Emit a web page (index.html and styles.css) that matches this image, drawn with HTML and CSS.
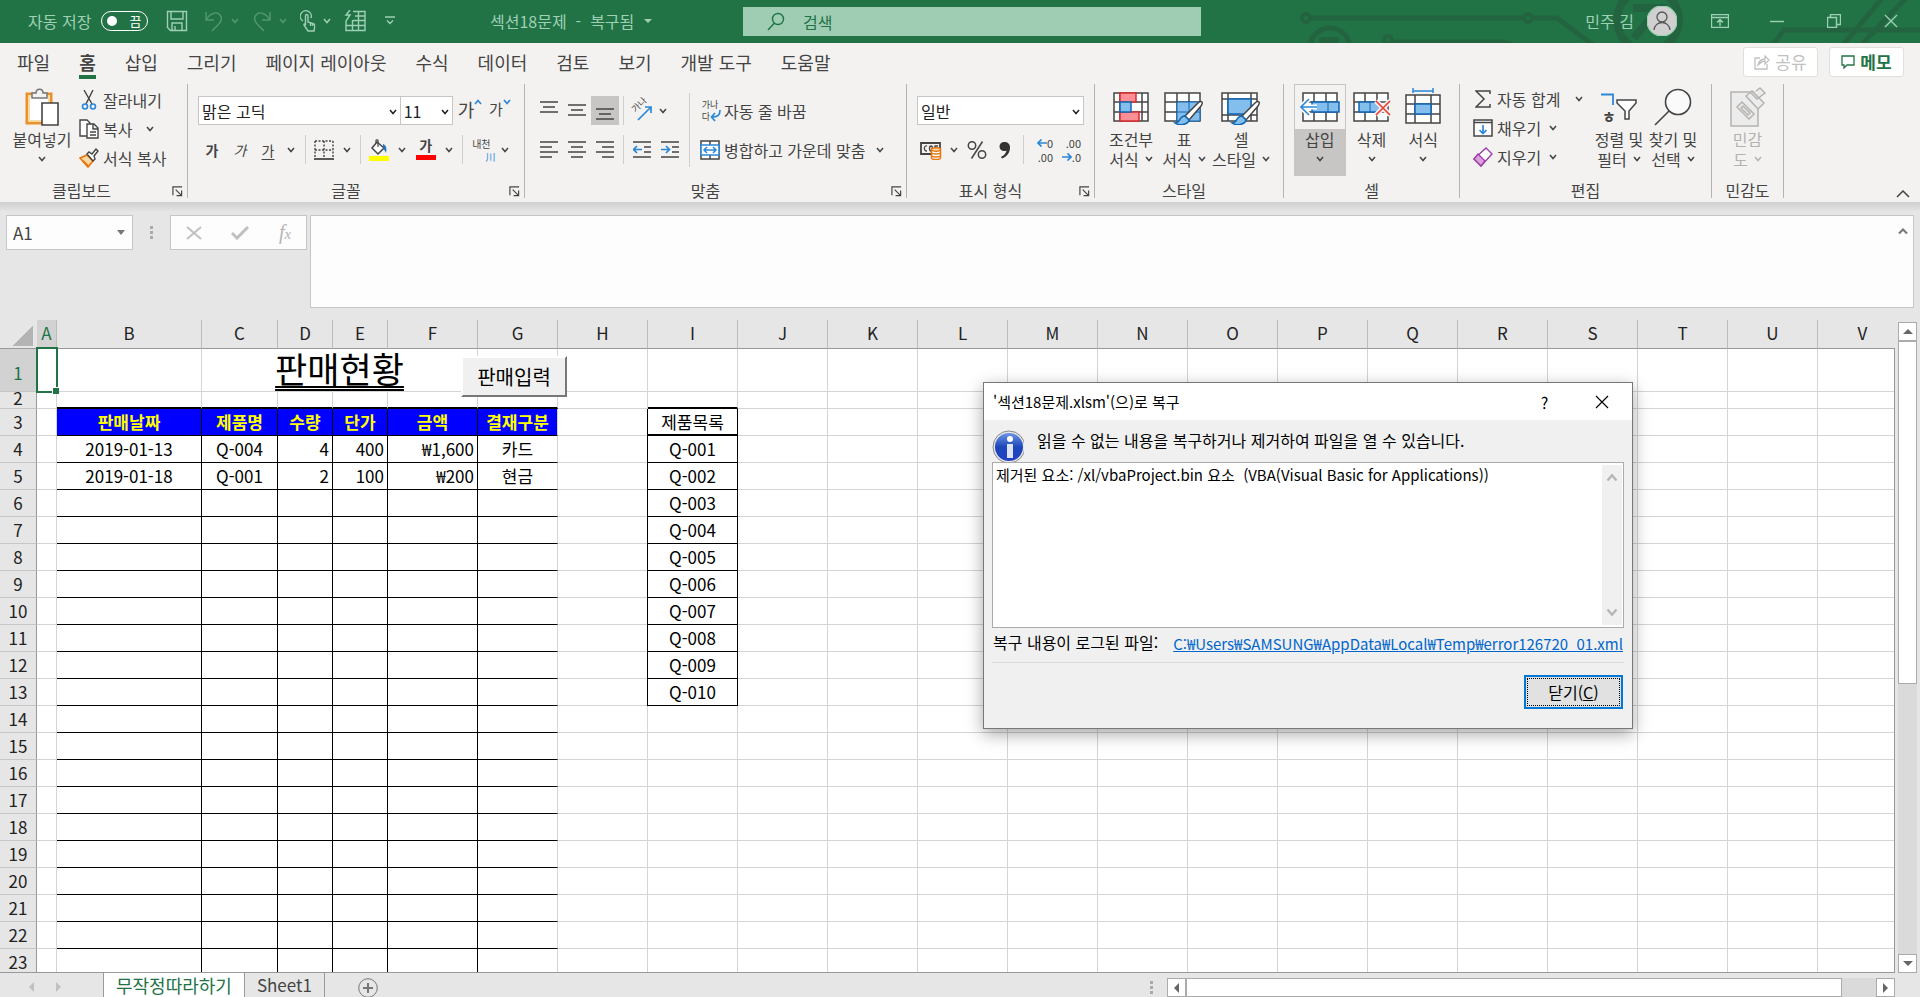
FILE: index.html
```html
<!DOCTYPE html>
<html lang="ko">
<head>
  <meta charset="UTF-8">
  <meta name="viewport" content="width=device-width, initial-scale=1.0">
  <title>섹션18문제 - 복구됨</title>
  <link rel="stylesheet" href="styles.css">
</head>
<body>
  <svg class="symbols" aria-hidden="true">
    <symbol id="chev" viewBox="0 0 8 6"><path d="M1 1l3 3.500L7 1" fill="none" stroke="currentColor" stroke-width="1.500"/></symbol>
    <symbol id="launch" viewBox="0 0 12 12"><path d="M1 10V1h10M4 4l6 6M10.500 5v5.500H5" fill="none" stroke="currentColor" stroke-width="1.300"/></symbol>
    <symbol id="brush" viewBox="0 0 34 34"><path d="M32 10c-1-1-3 0-4 1L15 24l4 4 12-14c1-2 2-3 1-4z" fill="#fff" stroke="#444" stroke-width="1.500"/><path d="M15 24c-4 0-5 3-6 5-1 1-3 2-4 2 4 3 13 2 14-3z" fill="#83beec" stroke="#1066b5" stroke-width="1.500"/></symbol>
  </svg>

  <header class="titlebar">
    <svg class="circuit" width="640" height="43" viewBox="0 0 640 43" fill="none" stroke="#24633f" stroke-width="5">
      <circle cx="26" cy="18" r="4" stroke-width="4"/><path d="M31 18h212"/><circle cx="248" cy="18" r="4" stroke-width="4"/><path d="M253 18h24l40 30"/>
      <circle cx="50" cy="48" r="20"/><path d="M39 40h20" stroke-width="6"/><circle cx="108" cy="40" r="4" stroke-width="4"/><path d="M113 42h110l12 4"/>
      <circle cx="368" cy="20" r="31" stroke-width="8"/><path d="M353 8h26L354 38" stroke-width="8"/>
      <path d="M492 46l12-16h136M562 46L604-4M580 46L628-4"/>
    </svg>
    <div class="quick">
      <span>자동 저장</span>
      <button class="toggle" aria-label="자동 저장 끔"><i></i>끔</button>
      <button class="qbtn" aria-label="저장"><svg width="22" height="22" viewBox="0 0 22 22"><path d="M1.500 1.500h19v19h-16l-3-3zM5 2v7h12V2M6 20v-7h10v7M9 20v-4" /></svg></button>
      <button class="qbtn dim" aria-label="실행 취소"><svg width="20" height="22" viewBox="0 0 20 22"><path d="M2 2v8h8M2 10C6 3 13 1 16 5c4 5-1 9-8 16"/></svg></button>
      <svg class="chev dim"><use href="#chev"/></svg>
      <button class="qbtn dim" aria-label="다시 실행"><svg width="20" height="22" viewBox="0 0 20 22"><path d="M18 2v8h-8M18 10C14 3 7 1 4 5c-4 5 1 9 8 16"/></svg></button>
      <svg class="chev dim"><use href="#chev"/></svg>
      <button class="qbtn" aria-label="터치"><svg width="16" height="22" viewBox="0 0 16 22"><path d="M3 11a5.500 5.500 0 1 1 8-3M5.500 15V6c0-2 2.500-2 2.500 0v6l6 2c1 .5 1 2 0 7H8l-4-6c0-1.500 1-1 2 0M10.500 13v3M12.500 14v2"/></svg></button>
      <svg class="chev"><use href="#chev"/></svg>
      <button class="qbtn" aria-label="표"><svg width="22" height="22" viewBox="0 0 22 22"><path d="M9 1.500h12v19H2V11M2 15.500h19M9 10.500h12M11 6h10M8.500 10v11M14.500 2v19M6 0L2 5h4l-4 6"/></svg></button>
      <svg class="custom" width="10" height="10" viewBox="0 0 10 10"><path d="M0 1h10M2 4.500l3 3 3-3"/></svg>
    </div>
    <div class="doc-name">섹션18문제&nbsp; -&nbsp; 복구됨 <i></i></div>
    <label class="search">
      <svg width="18" height="20" viewBox="0 0 18 20"><circle cx="11" cy="7" r="5.500"/><path d="M7.500 11L1 18"/></svg>
      <input type="text" placeholder="검색" aria-label="검색">
    </label>
    <div class="account">
      <span>민주 김</span>
      <svg width="30" height="30" viewBox="0 0 30 30"><circle cx="15" cy="15" r="15" fill="#d0d0d0"/><g fill="none" stroke="#555" stroke-width="1.300"><circle cx="15" cy="11" r="5"/><path d="M7 24c1-10 15-10 16 0"/></g></svg>
    </div>
    <div class="window-btns">
      <button aria-label="리본 표시 옵션"><svg width="18" height="14" viewBox="0 0 18 14"><path d="M.5.500h17v13H.5zM.5 3.500h17M9 12V6M6 8.500L9 5.500l3 3"/></svg></button>
      <button aria-label="최소화"><svg width="14" height="14" viewBox="0 0 14 14"><path d="M0 7.500h14"/></svg></button>
      <button aria-label="이전 크기로"><svg width="14" height="14" viewBox="0 0 14 14"><path d="M.5 3.500h9v10h-9zM3.500 3V.5h10v10H10"/></svg></button>
      <button aria-label="닫기"><svg width="14" height="14" viewBox="0 0 14 14"><path d="M1 1l12 12M13 1L1 13"/></svg></button>
    </div>
  </header>

  <nav class="tabs">
    <a href="#">파일</a><a href="#" class="active">홈</a><a href="#">삽입</a><a href="#">그리기</a><a href="#">페이지 레이아웃</a><a href="#">수식</a><a href="#">데이터</a><a href="#">검토</a><a href="#">보기</a><a href="#">개발 도구</a><a href="#">도움말</a>
    <div class="share-btns">
      <button class="share" disabled><svg width="16" height="16" viewBox="0 0 16 16"><path d="M6 4H1v11h12v-5M4 11c1-4 4-6 7-6V2l4 4-4 4V7c-3 0-5 2-7 4z"/></svg>공유</button>
      <button class="memo"><svg width="14" height="14" viewBox="0 0 14 14"><path d="M1 1h12v9H6l-3 3v-3H1z"/></svg>메모</button>
    </div>
  </nav>

  <section class="ribbon">
    <div class="group g-clip">
      <div class="body">
        <button class="big">
          <span class="pic"><svg width="36" height="40" viewBox="0 0 36 40"><path d="M3 7h24v29H3z" fill="#fff" stroke="#e8912d" stroke-width="3"/><path d="M5 9h20v25H5z" fill="none" stroke="#fbd9a0" stroke-width="2"/><path d="M8 11V6h4c0-5 7-5 7 0h4v5z" fill="#f3f2f1" stroke="#777" stroke-width="1.500"/><path d="M18 16h16v22H18z" fill="#fff" stroke="#444" stroke-width="1.600"/></svg></span>
          <span>붙여넣기</span><svg class="chev"><use href="#chev"/></svg>
        </button>
        <div class="list">
          <button><span class="ico"><svg width="16" height="20" viewBox="0 0 16 20"><path d="M3 0l8 14M12 0L5 14" fill="none" stroke="#444" stroke-width="1.400"/><g fill="none" stroke="#2b88d8" stroke-width="1.600"><circle cx="4" cy="16.500" r="2.500"/><circle cx="12" cy="16.500" r="2.500"/></g></svg></span>잘라내기</button>
          <button><span class="ico"><svg width="20" height="20" viewBox="0 0 20 20" fill="#fff" stroke="#444" stroke-width="1.400"><path d="M1 1h7l3 3v13H1z"/><path d="M8 5h7l4 4v10H8zM14 5v5h5M11 13h6M11 16h6"/></svg></span>복사 <svg class="chev"><use href="#chev"/></svg></button>
          <button><span class="ico"><svg width="20" height="20" viewBox="0 0 20 20"><path d="M1 10l7-3 6 6-5 6z" fill="#fbd9a0" stroke="#e8740c" stroke-width="1.600"/><path d="M4 13l5 5" stroke="#e8740c" stroke-width="2"/><path d="M8 6l2-2 3 2 4-5 2 2-4 5 1 3-2 2z" fill="#fff" stroke="#444" stroke-width="1.400"/></svg></span>서식 복사</button>
        </div>
      </div>
      <div class="label">클립보드<svg class="launch"><use href="#launch"/></svg></div>
    </div>

    <div class="group g-font">
      <div class="body rows">
        <div class="row">
          <span class="combo font-name"><select aria-label="글꼴"><option>맑은 고딕</option></select><svg class="chev"><use href="#chev"/></svg></span>
          <span class="combo font-size"><select aria-label="글꼴 크기"><option>11</option></select><svg class="chev"><use href="#chev"/></svg></span>
          <button class="tool grow">가<svg width="8" height="6" viewBox="0 0 8 6"><path d="M1 5l3-3.500L7 5"/></svg></button>
          <button class="tool shrink">가<svg width="8" height="6" viewBox="0 0 8 6"><path d="M1 1l3 3.500L7 1"/></svg></button>
        </div>
        <div class="row">
          <button class="tool bold">가</button><button class="tool italic">가</button><button class="tool under">가</button><button class="drop" aria-label="밑줄"><svg class="chev"><use href="#chev"/></svg></button>
          <i class="vsep"></i>
          <button class="tool" aria-label="테두리"><svg width="20" height="20" viewBox="0 0 20 20"><path d="M1 1h18M1 10h18M1 1v17M10 1v17M19 1v17" fill="none" stroke="#444" stroke-width="1.400" stroke-dasharray="2 1.500"/><path d="M0 19h20" stroke="#333" stroke-width="1.600"/></svg></button><button class="drop" aria-label="테두리 종류"><svg class="chev"><use href="#chev"/></svg></button>
          <i class="vsep"></i>
          <button class="tool" aria-label="채우기 색"><svg width="20" height="22" viewBox="0 0 20 22"><path d="M8 3l7 6-6 6-6-6z" fill="#fff" stroke="#444" stroke-width="1.500"/><path d="M9 8V1.500c0-1-2-1-2 0V4" fill="none" stroke="#444" stroke-width="1.200"/><path d="M14 5c3 1 4 4 3 9-1-2-2-4-3-5z" fill="#1e74c0"/><path d="M0 17h20v5H0z" fill="#ff0"/></svg></button><button class="drop" aria-label="채우기 색 선택"><svg class="chev"><use href="#chev"/></svg></button>
          <button class="tool color">가</button><button class="drop" aria-label="글꼴 색 선택"><svg class="chev"><use href="#chev"/></svg></button>
          <i class="vsep"></i>
          <button class="tool ruby"><span>내천</span><b>川</b></button><button class="drop" aria-label="윗주"><svg class="chev"><use href="#chev"/></svg></button>
        </div>
      </div>
      <div class="label">글꼴<svg class="launch"><use href="#launch"/></svg></div>
    </div>

    <div class="group g-align">
      <div class="body">
        <div class="rows">
          <div class="row">
            <button class="tool" aria-label="위쪽 맞춤"><svg class="lines" viewBox="0 0 18 22"><path d="M0 2h18M3 7h12M0 12h18"/></svg></button><button class="tool" aria-label="가운데 맞춤"><svg class="lines" viewBox="0 0 18 22"><path d="M0 5h18M3 10h12M0 15h18"/></svg></button><button class="tool on" aria-label="아래쪽 맞춤"><svg class="lines" viewBox="0 0 18 22"><path d="M0 9h18M3 14h12M0 19h18"/></svg></button>
            <i class="vsep"></i>
            <button class="tool orient" aria-label="방향"><span>가나</span><svg width="16" height="16" viewBox="0 0 16 16"><path d="M1 15L14 2M8 2h6v6"/></svg></button><button class="drop near" aria-label="방향 선택"><svg class="chev"><use href="#chev"/></svg></button>
          </div>
          <div class="row">
            <button class="tool" aria-label="왼쪽 맞춤"><svg class="lines" viewBox="0 0 18 22"><path d="M0 3h18M0 8h12M0 13h18M0 18h12"/></svg></button><button class="tool" aria-label="가운데"><svg class="lines" viewBox="0 0 18 22"><path d="M0 3h18M3 8h12M0 13h18M3 18h12"/></svg></button><button class="tool" aria-label="오른쪽 맞춤"><svg class="lines" viewBox="0 0 18 22"><path d="M0 3h18M6 8h12M0 13h18M6 18h12"/></svg></button>
            <i class="vsep"></i>
            <button class="tool" aria-label="내어쓰기"><svg class="lines" viewBox="0 0 18 22"><path d="M0 3h18M11 8h7M11 13h7M0 18h18"/><path class="blue" d="M9 10.500H1M4 7l-3.500 3.500L4 14"/></svg></button><button class="tool" aria-label="들여쓰기"><svg class="lines" viewBox="0 0 18 22"><path d="M0 3h18M11 8h7M11 13h7M0 18h18"/><path class="blue" d="M0 10.500h8M5 7l3.500 3.500L5 14"/></svg></button>
          </div>
        </div>
        <i class="vsep tall"></i>
        <div class="rows">
          <div class="row"><button class="wide"><span class="tool wrap"><span>가나<br>다</span><svg width="11" height="12" viewBox="0 0 11 12"><path d="M10 0c0 5-2 7-8 7M5 3L1.500 7 5 11"/></svg></span>자동 줄 바꿈</button></div>
          <div class="row"><button class="wide"><span class="tool"><svg width="20" height="20" viewBox="0 0 20 20"><path d="M1 1h18v18H1zM10 1v18" fill="#fff" stroke="#444" stroke-width="1.500"/><path d="M1 5h18v10H1z" fill="#fff" stroke="#2b88d8" stroke-width="1.600"/><path d="M4 10h12M7 7l-3 3 3 3M13 7l3 3-3 3" fill="none" stroke="#2b88d8" stroke-width="1.500"/></svg></span>병합하고 가운데 맞춤</button><button class="drop merge" aria-label="병합"><svg class="chev"><use href="#chev"/></svg></button></div>
        </div>
      </div>
      <div class="label">맞춤<svg class="launch"><use href="#launch"/></svg></div>
    </div>

    <div class="group g-number">
      <div class="body rows">
        <div class="row"><span class="combo format"><select aria-label="표시 형식"><option>일반</option></select><svg class="chev"><use href="#chev"/></svg></span></div>
        <div class="row">
          <button class="tool" aria-label="회계"><svg width="22" height="20" viewBox="0 0 22 20"><path d="M1 3h19v11H1z" fill="none" stroke="#444" stroke-width="1.800"/><path d="M7 6c-3-1-4 5 0 5M11 6c-2 0-2 5 0 5s2-5 0-5M15 11V6h3" fill="none" stroke="#444" stroke-width="1.300"/><path d="M11.500 9v9c0 2 9 2 9 0V9z" fill="#fff" stroke="#e8740c" stroke-width="1.400"/><ellipse cx="16" cy="9.500" rx="4.500" ry="1.700" fill="#fbd9a0" stroke="#e8740c" stroke-width="1.400"/><path d="M11.500 12.500c0 2 9 2 9 0M11.500 15.500c0 2 9 2 9 0" fill="none" stroke="#e8740c" stroke-width="1.400"/></svg></button><button class="drop" aria-label="통화"><svg class="chev"><use href="#chev"/></svg></button>
          <button class="tool" aria-label="백분율"><svg width="20" height="20" viewBox="0 0 20 20" fill="none" stroke="#444" stroke-width="1.500"><circle cx="5" cy="5.500" r="3.700"/><circle cx="15" cy="14.500" r="3.700"/><path d="M15.500 1.500l-11 17"/></svg></button><button class="tool" aria-label="쉼표"><svg width="12" height="18" viewBox="0 0 12 18"><path d="M5 1a4.500 4.500 0 0 0 0 9c1 0 2 0 2.500-.5C7 13 4 15 2 16l1 1.500c5-2 8-6 8-11C11 3 9 1 5 1z" fill="#333"/></svg></button>
          <i class="vsep"></i>
          <button class="tool dec"><span><svg width="10" height="8" viewBox="0 0 10 8"><path d="M10 4H1M4.500 .5L1 4l3.500 3.500"/></svg>0</span><span>.00</span></button><button class="tool dec"><span>.00</span><span><svg width="10" height="8" viewBox="0 0 10 8"><path d="M0 4h9M5.500 .5L9 4 5.500 7.500"/></svg>.0</span></button>
        </div>
      </div>
      <div class="label">표시 형식<svg class="launch"><use href="#launch"/></svg></div>
    </div>

    <div class="group g-styles">
      <div class="body">
        <button class="big"><span class="pic"><svg width="36" height="30" viewBox="0 0 36 30"><path d="M1 1h34v28H1zM1 10h34M1 20h34M7 1v28M29 1v28" fill="#fff" stroke="#444" stroke-width="1.500"/><path d="M7 1h16v9H7zM7 20h19v9H7z" fill="#ff8f94" stroke="#d92b2b" stroke-width="1.500"/><path d="M7 10h11v10H7z" fill="#83beec" stroke="#1066b5" stroke-width="1.500"/></svg></span><span>조건부</span><span>서식 <svg class="chev"><use href="#chev"/></svg></span></button>
        <button class="big"><span class="pic"><svg width="40" height="36" viewBox="0 0 40 36"><path d="M1 4h35v28H1zM1 13h35M1 23h35M13 4v28M25 4v28" fill="#fff" stroke="#444" stroke-width="1.500"/><path d="M13 13h23v19H13z" fill="#83beec" stroke="#1066b5"/><path d="M13 23h23M25 13v19" stroke="#1066b5"/><use href="#brush" x="6" y="3" width="34" height="34"/></svg></span><span>표</span><span>서식 <svg class="chev"><use href="#chev"/></svg></span></button>
        <button class="big"><span class="pic"><svg width="40" height="36" viewBox="0 0 40 36"><path d="M1 4h35v28H1zM1 10h35M1 26h35M7 4v28M30 4v28" fill="#fff" stroke="#444" stroke-width="1.500"/><path d="M7 10h23v15H7z" fill="#83beec" stroke="#1066b5" stroke-width="1.500"/><use href="#brush" x="6" y="3" width="34" height="34"/></svg></span><span>셀</span><span>스타일 <svg class="chev"><use href="#chev"/></svg></span></button>
      </div>
      <div class="label">스타일</div>
    </div>

    <div class="group g-cells">
      <div class="body">
        <button class="big hot"><span class="pic"><svg width="40" height="38" viewBox="0 0 40 38"><path d="M3 5h34v28H3zM3 14h34M3 24h34M14 5v28M26 5v28" fill="#fff" stroke="#444" stroke-width="1.500"/><path d="M12 14h27v10H12z" fill="#83beec" stroke="#1066b5" stroke-width="1.500"/><path d="M28 14v10" stroke="#1066b5"/><path d="M17 19H2M9 11l-8 8 8 8" fill="none" stroke="#fff" stroke-width="5"/><path d="M17 19H2M9 11l-8 8 8 8" fill="none" stroke="#2b88d8" stroke-width="1.600"/></svg></span><span>삽입</span><svg class="chev"><use href="#chev"/></svg></button>
        <button class="big"><span class="pic"><svg width="38" height="38" viewBox="0 0 38 38"><path d="M1 5h34v28H1zM1 14h34M1 24h34M12 5v28M24 5v28" fill="#fff" stroke="#444" stroke-width="1.500"/><path d="M6 14h20l3 5-3 5H6z" fill="#83beec" stroke="#1066b5" stroke-width="1.500"/><path d="M17 14v10" stroke="#1066b5"/><path d="M23 13l14 14M37 13L23 27" stroke="#f3f2f1" stroke-width="5"/><path d="M23 13l14 14M37 13L23 27" stroke="#e8413c" stroke-width="1.700"/></svg></span><span>삭제</span><svg class="chev"><use href="#chev"/></svg></button>
        <button class="big"><span class="pic"><svg width="36" height="38" viewBox="0 0 36 38"><path d="M1 7h34v28H1zM1 16h34M1 26h34M10 7v28M26 7v28" fill="#fff" stroke="#444" stroke-width="1.500"/><path d="M10 16h16v10H10z" fill="#83beec" stroke="#1066b5" stroke-width="1.500"/><path d="M8 3h20M8 0v5M28 0v5" stroke="#2b88d8" stroke-width="1.500"/></svg></span><span>서식</span><svg class="chev"><use href="#chev"/></svg></button>
      </div>
      <div class="label">셀</div>
    </div>

    <div class="group g-edit">
      <div class="body">
        <div class="list">
          <button><span class="ico"><svg width="16" height="18" viewBox="0 0 16 18"><path d="M15 4V1H1l8 8-8 8h14v-3" fill="none" stroke="#444" stroke-width="1.500"/></svg></span>자동 합계 <svg class="chev"><use href="#chev"/></svg></button>
          <button><span class="ico"><svg width="20" height="18" viewBox="0 0 20 18"><path d="M1 1h18v16H1z" fill="#fff" stroke="#444" stroke-width="1.500"/><path d="M1 3.500h18" stroke="#444" stroke-width="1.500"/><path d="M10 6v8M6.500 11l3.500 3.500 3.500-3.500" fill="none" stroke="#2b88d8" stroke-width="1.700"/></svg></span>채우기<svg class="chev"><use href="#chev"/></svg></button>
          <button><span class="ico"><svg width="20" height="20" viewBox="0 0 20 20"><path d="M13 1l6 6L8 19l-7-7z" fill="#fff" stroke="#9b3ea8" stroke-width="1.400"/><path d="M1 12l4-5 7 7-4 5z" fill="#dca0dd" stroke="#9b3ea8" stroke-width="1.400"/></svg></span>지우기<svg class="chev"><use href="#chev"/></svg></button>
        </div>
        <button class="big"><span class="pic sort"><b>ㅎ</b><svg width="36" height="28" viewBox="0 0 36 28"><path d="M0 1.500h12V12" fill="none" stroke="#2b88d8" stroke-width="1.800"/><path d="M16 7h19v3l-7 8v8h-4v-8l-8-8z" fill="#fff" stroke="#444" stroke-width="1.500"/></svg></span><span>정렬 및</span><span>필터 <svg class="chev"><use href="#chev"/></svg></span></button>
        <button class="big"><span class="pic"><svg width="38" height="38" viewBox="0 0 38 38"><circle cx="24" cy="14" r="12.500" fill="#fafafa" stroke="#444" stroke-width="1.600"/><path d="M15 23L1 37" stroke="#444" stroke-width="1.600"/></svg></span><span>찾기 및</span><span>선택 <svg class="chev"><use href="#chev"/></svg></span></button>
      </div>
      <div class="label">편집</div>
    </div>

    <div class="group g-sens">
      <div class="body">
        <button class="big" disabled><span class="pic"><svg width="36" height="40" viewBox="0 0 36 40" fill="#ececec" stroke="#b5b3b1" stroke-width="1.500"><path d="M1 5h27v34H1z"/><path d="M7 20l5-5 12 12-5 5zM11 21l2-2 7 7-2 2zM16 9l6-5 12 12-6 6zM21 6l6 6 8-6-5-5-4 3"/></svg></span><span>민감</span><span>도 <svg class="chev"><use href="#chev"/></svg></span></button>
      </div>
      <div class="label">민감도</div>
    </div>
    <button class="collapse" aria-label="리본 축소"><svg width="14" height="8" viewBox="0 0 14 8"><path d="M1 7l6-6 6 6"/></svg></button>
  </section>

  <section class="formula">
    <div class="name-box"><input type="text" value="A1" aria-label="이름 상자"><i></i></div>
    <span class="dots"></span>
    <div class="fx">
      <button aria-label="취소"><svg width="16" height="14" viewBox="0 0 16 14"><path d="M1 1l14 12M15 1L1 13"/></svg></button>
      <button aria-label="입력"><svg width="18" height="14" viewBox="0 0 18 14"><path class="check" d="M1 7l5 5L17 1"/></svg></button>
      <button aria-label="함수 삽입"><em>f<small>x</small></em></button>
    </div>
    <div class="formula-input"><textarea aria-label="수식 입력줄"></textarea><svg width="10" height="7" viewBox="0 0 10 7"><path d="M1 5.500l4-4 4 4"/></svg></div>
  </section>

  <main class="workarea">
    <div class="sheet">
      <table id="grid"></table>
      <div class="selection"></div>
      <button class="sheet-btn">판매입력</button>
    </div>
    <div class="vscroll">
      <button class="up" aria-label="위로"></button>
      <div class="track"><div class="thumb"></div></div>
      <button class="down" aria-label="아래로"></button>
    </div>
  </main>

  <footer class="sheetbar">
    <div class="sheet-nav"><i class="left"></i><i class="right"></i></div>
    <button class="sheet-tab current">무작정따라하기</button>
    <button class="sheet-tab">Sheet1</button>
    <button class="add" aria-label="새 시트"><svg width="20" height="20" viewBox="0 0 20 20"><circle cx="10" cy="10" r="9.300" fill="none" stroke="#777"/><path d="M10 5v10M5 10h10" stroke="#777" stroke-width="2"/></svg></button>
    <span class="dots"></span>
    <div class="hscroll">
      <button class="left" aria-label="왼쪽으로"></button>
      <div class="track"><div class="thumb"></div></div>
      <button class="right" aria-label="오른쪽으로"></button>
    </div>
  </footer>

  <div class="dialog" role="dialog" aria-labelledby="dlgTitle">
    <div class="dialog-title">
      <span id="dlgTitle">'섹션18문제.xlsm'(으)로 복구</span>
      <button aria-label="도움말">?</button>
      <button aria-label="닫기"><svg width="14" height="14" viewBox="0 0 14 14"><path d="M1 1l12 12M13 1L1 13"/></svg></button>
    </div>
    <div class="dialog-body">
      <div class="message">
        <svg width="32" height="32" viewBox="0 0 32 32"><defs><linearGradient id="info" x1="0" y1="0" x2="0" y2="1"><stop offset="0" stop-color="#6f93e8"/><stop offset=".5" stop-color="#1d48b8"/><stop offset="1" stop-color="#2340c8"/></linearGradient></defs><circle cx="17" cy="17" r="16" fill="#e8e8e8" stroke="#888"/><circle cx="17" cy="17" r="14" fill="url(#info)"/><circle cx="18" cy="9" r="3" fill="#fff"/><path d="M15 14h6v14h-6z" fill="#dfe4f2"/></svg>
        <span>읽을 수 없는 내용을 복구하거나 제거하여 파일을 열 수 있습니다.</span>
      </div>
      <div class="details">
        <p>제거된 요소: /xl/vbaProject.bin 요소&nbsp; (VBA(Visual Basic for Applications))</p>
        <div class="strip"><svg class="chev flip"><use href="#chev"/></svg><svg class="chev"><use href="#chev"/></svg></div>
      </div>
      <div class="log"><span>복구 내용이 로그된 파일:</span><a href="#">C:₩Users₩SAMSUNG₩AppData₩Local₩Temp₩error126720_01.xml</a></div>
      <div class="actions"><button>닫기(<u>C</u>)</button></div>
    </div>
  </div>
  <script src="sheet.js"></script>
</body>
</html>
```
FILE: styles.css
```css
* {
  box-sizing: border-box;
}
body {
  margin: 0;
  height: 100vh;
  display: flex;
  flex-direction: column;
  overflow: hidden;
  background: #e6e6e6;
  color: #444;
  font: 16px/20px "Noto Sans CJK KR", sans-serif;
}
button, input, select, textarea {
  font: inherit;
  color: inherit;
  background: none;
  border: 0;
  padding: 0;
  margin: 0;
  border-radius: 0;
}
button {
  display: flex;
  align-items: center;
  justify-content: center;
  white-space: nowrap;
}
svg {
  flex: none;
  display: block;
}
i {
  flex: none;
}
.symbols {
  position: absolute;
  width: 0;
  height: 0;
}
.chev {
  width: 8px;
  height: 6px;
}

/* title bar */
.titlebar {
  position: relative;
  display: flex;
  align-items: center;
  flex: none;
  height: 43px;
  padding: 0 1px 2px 0;
  background: #217346;
  color: #9fd0b5;
}
.titlebar svg {
  stroke: #9fd0b5;
  stroke-width: 1.4;
  fill: none;
}
.titlebar .circuit {
  position: absolute;
  right: 0;
  top: 0;
  stroke: #24633f;
  stroke-width: 5;
}
.quick {
  display: flex;
  align-items: center;
  width: 490px;
  padding-left: 28px;
}
.quick .chev {
  margin: 0 13px 0 7px;
  stroke: none;
}
.quick .dim {
  opacity: 0.4;
}
.toggle {
  width: 47px;
  height: 20px;
  margin: 0 18px 0 10px;
  padding: 0 6px 0 5px;
  justify-content: space-between;
  border: 1px solid #fff;
  border-radius: 10px;
  color: #fff;
  font-size: 13px;
}
.toggle i {
  width: 10px;
  height: 10px;
  border-radius: 50%;
  background: #fff;
}
.quick .qbtn:nth-of-type(2) {
  margin-right: 16px;
}
.custom {
  margin-left: 19px;
}
.doc-name {
  display: flex;
  align-items: center;
  flex: none;
  width: 253px;
}
.doc-name i {
  margin-left: 10px;
  border: 4px solid transparent;
  border-top-color: #9fd0b5;
  border-bottom: 0;
}
.search {
  display: flex;
  align-items: center;
  gap: 18px;
  width: 458px;
  height: 29px;
  margin-top: 2px;
  padding-left: 24px;
  background: #9fcdb3;
  color: #217346;
}
.titlebar .search svg {
  stroke: #217346;
}
.search input::placeholder {
  color: #217346;
}
.account {
  position: relative;
  display: flex;
  align-items: center;
  gap: 13px;
  margin-left: auto;
}
.window-btns {
  position: relative;
  display: flex;
  margin-left: 14px;
}
.window-btns button {
  width: 57px;
  height: 41px;
}

/* ribbon tabs */
.tabs {
  display: flex;
  flex: none;
  gap: 29px;
  height: 41px;
  padding: 4px 16px 0 17px;
  background: #f3f2f1;
  font-size: 18px;
}
.tabs a {
  height: 32px;
  line-height: 30px;
  color: #444;
  text-decoration: none;
}
.tabs .active {
  border-bottom: 4px solid #217346;
  font-weight: bold;
}
.share-btns {
  display: flex;
  gap: 11px;
  margin-left: auto;
}
.share-btns button {
  gap: 5px;
  width: 75px;
  height: 30px;
  border: 1px solid #e1dfdd;
  border-radius: 3px;
  background: #fff;
  font-size: 17px;
}
.share-btns svg {
  fill: none;
  stroke: currentColor;
  stroke-width: 1.3;
}
.share {
  color: #c3c1bf;
}
.memo {
  color: #217346;
  font-weight: bold;
}

/* ribbon */
.ribbon {
  position: relative;
  display: flex;
  flex: none;
  height: 118px;
  padding-bottom: 4px;
  background: #f3f2f1;
}
.group {
  display: flex;
  flex-direction: column;
  flex: none;
  padding: 0 10px;
  border-right: 1px solid #b5b3b1;
}
.g-clip { width: 188px; padding-right: 0; }
.g-font { width: 337px; }
.g-align { width: 382px; }
.g-number { width: 188px; }
.g-styles { width: 189px; padding-right: 0; }
.g-cells { width: 176px; }
.g-edit { width: 252px; }
.g-sens { width: 72px; }
.body {
  display: flex;
  flex: 1;
}
.label {
  position: relative;
  line-height: 16px;
  text-align: center;
}
.g-font .label, .g-align .label, .g-number .label, .g-styles .label {
  padding-right: 20px;
}
.g-clip .label {
  padding-right: 34px;
}
.launch {
  position: absolute;
  right: -6px;
  bottom: 1px;
  width: 11px;
  height: 11px;
}
.g-clip .launch {
  right: 4px;
}
.rows {
  display: flex;
  flex-direction: column;
  gap: 10px;
  padding-top: 12px;
}
.row {
  display: flex;
  flex: none;
  height: 29px;
}
.tool {
  display: flex;
  align-items: center;
  justify-content: center;
  flex: none;
  width: 28px;
  height: 29px;
}
.tool.on {
  background: #c8c6c4;
}
.drop {
  width: 19px;
}
.drop.near {
  width: 14px;
}
.drop.merge {
  width: 30px;
}
.vsep {
  width: 1px;
  margin: 0 4px;
  background: #d0cecc;
}
.vsep.tall {
  height: 74px;
  margin: 9px 6px 0 5px;
}
.lines {
  width: 18px;
  height: 22px;
  fill: none;
  stroke: #444;
  stroke-width: 1.5;
}
.lines .blue {
  stroke: #2b88d8;
  stroke-width: 1.7;
}
.big {
  flex-direction: column;
  justify-content: flex-start;
  width: 52px;
  height: 92px;
}
.big .pic {
  display: flex;
  align-items: center;
  justify-content: center;
  flex: none;
  width: 100%;
  height: 45px;
}
.big > span:not(.pic) {
  display: flex;
  align-items: center;
  gap: 6px;
}
.big > .chev {
  margin-top: 7px;
}
.big:disabled {
  color: #b5b3b1;
}
.hot {
  border: 1px solid #c8c6c4;
  background: linear-gradient(#f3f2f1 44px, #c8c6c4 44px);
}
.hot .pic {
  height: 44px;
}
.list button {
  height: 29px;
}
.list .ico {
  display: flex;
  justify-content: center;
  width: 20px;
  margin-right: 4px;
}
.list .chev {
  margin-left: 8px;
}
.g-clip .big {
  width: 60px;
  padding-left: 4px;
}
.g-clip .list {
  padding: 1px 0 0 9px;
}
.g-clip .list .chev {
  margin-left: 14px;
}
.combo {
  position: relative;
  height: 29px;
  border: 1px solid #c8c6c4;
  background: #fff;
  color: #222;
}
.combo select {
  display: block;
  width: 100%;
  height: 100%;
  padding-left: 3px;
  appearance: none;
}
.combo .chev {
  position: absolute;
  right: 3px;
  top: 12px;
}
.font-name { width: 209px; }
.font-size { width: 54px; border-left: 0; }
.format { width: 168px; }
.grow, .shrink {
  align-items: flex-start;
  padding-top: 3px;
}
.grow {
  margin: 0 2px 0 3px;
  font-size: 18px;
}
.shrink {
  font-size: 15px;
}
.tool.grow svg, .tool.shrink svg, .orient svg, .wrap svg, .dec svg {
  fill: none;
  stroke: #2b88d8;
  stroke-width: 1.7;
}
.bold, .italic, .under, .color {
  font-size: 14px;
}
.bold, .color {
  font-weight: bold;
}
.italic {
  font-style: italic;
}
.under {
  text-decoration: underline;
  text-underline-offset: 3px;
}
.color {
  background: linear-gradient(#f00, #f00) 4px 20px / 20px 5px no-repeat;
  align-items: flex-start;
}
.ruby {
  flex-direction: column;
  font-size: 10px;
  line-height: 13px;
}
.ruby b {
  align-self: flex-end;
  color: #2b88d8;
  font-weight: normal;
}
.orient {
  position: relative;
}
.orient span {
  position: absolute;
  left: 3px;
  top: 3px;
  font-size: 9px;
  line-height: 12px;
  transform: rotate(-45deg);
}
.orient svg {
  margin: 5px 0 0 6px;
}
.wide .wrap {
  position: relative;
  font-size: 9px;
  line-height: 12px;
  text-align: left;
}
.wrap svg {
  position: absolute;
  right: 3px;
  bottom: 3px;
}
.dec {
  flex-direction: column;
  align-items: flex-end;
  padding-right: 3px;
  font-size: 11px;
  line-height: 14px;
}
.dec span {
  display: flex;
  align-items: center;
}
.g-styles .body {
  gap: 1px;
}
.g-styles .big:last-child {
  width: 60px;
}
.g-edit .list {
  width: 122px;
  padding-left: 3px;
}
.g-edit .big {
  width: 54px;
}
.g-edit .list button:first-child .chev {
  margin-left: 15px;
}
.sort {
  position: relative;
}
.sort b {
  position: absolute;
  left: 10px;
  top: 24px;
  font-size: 15px;
  line-height: 18px;
}
.collapse {
  position: absolute;
  right: 10px;
  bottom: 4px;
}
.collapse svg {
  fill: none;
  stroke: #444;
  stroke-width: 1.5;
}

/* formula bar */
.formula {
  display: flex;
  align-items: flex-start;
  flex: none;
  height: 118px;
  padding: 13px 6px 12px;
  background: linear-gradient(#cfcfcf, #e6e6e6 10px);
}
.name-box, .fx, .formula-input {
  display: flex;
  align-items: center;
  height: 35px;
  border: 1px solid #c6c6c6;
  background: #fdfdfd;
}
.name-box {
  width: 127px;
  padding: 0 7px 0 6px;
}
.name-box input {
  flex: 1;
  min-width: 0;
  font-size: 17px;
}
.name-box i {
  border: 4px solid transparent;
  border-top: 5px solid #777;
  border-bottom: 0;
}
.dots {
  width: 3px;
  height: 13px;
  background: repeating-linear-gradient(#aaa 0 3px, transparent 3px 5px);
}
.formula .dots {
  margin: 11px 17px 0;
}
.fx {
  width: 137px;
  justify-content: space-around;
}
.fx svg {
  fill: none;
  stroke: #c0c0c0;
  stroke-width: 2;
}
.fx .check {
  stroke-width: 3;
}
.fx em {
  color: #b5b5b5;
  font: italic 20px/24px "Liberation Serif", serif;
}
.fx small {
  font-size: 15px;
}
.formula-input {
  flex: 1;
  align-items: flex-start;
  height: 93px;
  margin-left: 3px;
  padding: 12px 5px;
}
.formula-input textarea {
  flex: 1;
  height: 100%;
  resize: none;
}
.formula-input svg {
  fill: none;
  stroke: #777;
  stroke-width: 2;
}

/* sheet */
.workarea {
  display: flex;
  flex: 1;
  min-height: 0;
}
.sheet {
  position: relative;
  flex: 1;
  min-width: 0;
  overflow: hidden;
  border-bottom: 1px solid #999;
}
.sheet::after {
  content: "";
  position: absolute;
  right: 0;
  top: 28px;
  bottom: 0;
  width: 1px;
  background: #999;
}
#grid {
  width: 1908px;
  table-layout: fixed;
  border-spacing: 0;
  color: #000;
  font-size: 17px;
}
.c-head { width: 37px; }
.c-A { width: 20px; }
.c-B { width: 145px; }
.c-C { width: 76px; }
.c-D, .c-E { width: 55px; }
.c-F { width: 90px; }
.c-G { width: 80px; }
#grid th {
  padding: 0;
  background: #e6e6e6;
  color: #222;
  font-weight: normal;
}
#grid thead th {
  height: 29px;
  padding-bottom: 2px;
  border-right: 1px solid #bbb;
  border-bottom: 1px solid #999;
}
#grid tbody th {
  border-right: 1px solid #999;
  border-bottom: 1px solid #c6c6c6;
}
#grid .row-1 th {
  padding-top: 6px;
}
#grid th.picked {
  background: #d2d2d2;
  color: #217346;
}
#grid thead .corner {
  border-right-color: #e6e6e6;
  background: linear-gradient(135deg, transparent 50%, #b4b4b4 50%) 12px 5px / 21px 21px no-repeat #e6e6e6;
}
#grid td {
  height: 27px;
  padding: 0 3px;
  border-right: 1px solid #d4d4d4;
  border-bottom: 1px solid #d4d4d4;
  background: #fff;
  text-align: center;
  white-space: nowrap;
}
#grid .row-1 td {
  height: 43px;
}
#grid .row-2 td {
  height: 17px;
}
.row-2 div {
  display: flex;
  align-items: flex-end;
  justify-content: center;
  height: 16px;
  overflow: hidden;
}
#grid .title {
  padding: 0 0 4px;
  font-size: 35px;
  line-height: 38px;
  text-decoration: underline double 2px;
  text-underline-offset: 3px;
}
#grid .num {
  text-align: right;
}
#grid .line-b {
  border-bottom-color: #000;
}
#grid .line-r {
  border-right-color: #000;
}
/* the left edge is drawn over the neighbour's gridline */
#grid .line-l {
  box-shadow: -1px 0 #000;
}
#grid .thick {
  border-bottom: 2px solid #000;
}
#grid .head {
  background: #00f;
  color: #ff0;
  font-weight: bold;
}
.selection {
  position: absolute;
  left: 36px;
  top: 27px;
  width: 22px;
  height: 46px;
  border: 2px solid #217346;
}
.selection::after {
  content: "";
  position: absolute;
  right: -3px;
  bottom: -3px;
  width: 6px;
  height: 6px;
  background: #217346;
  border: 1px solid #fff;
  border-width: 1px 0 0 1px;
}
.sheet-btn {
  position: absolute;
  left: 461px;
  top: 36px;
  width: 106px;
  height: 41px;
  border: 2px solid #fff;
  border-right-color: #777;
  border-bottom-color: #777;
  background: #f0f0f0;
  color: #000;
  font-size: 20px;
}

/* scroll bars */
.vscroll {
  display: flex;
  flex-direction: column;
  width: 19px;
  margin: 2px 3px 0;
}
.hscroll {
  display: flex;
  flex: none;
  width: 728px;
  max-width: 40%;
  height: 19px;
  margin-top: 5px;
}
.vscroll button, .hscroll button {
  flex: none;
  width: 19px;
  height: 19px;
  border: 1px solid #ababab;
  background: #fff;
}
.vscroll button::before, .hscroll button::before, .sheet-nav i {
  content: "";
  border: 5px solid transparent;
}
.vscroll .up::before {
  border-bottom-color: #666;
  border-top: 0;
}
.vscroll .down::before {
  border-top-color: #666;
  border-bottom: 0;
}
.hscroll .left::before {
  border-right-color: #666;
  border-left: 0;
}
.hscroll .right::before {
  border-left-color: #666;
  border-right: 0;
}
.track {
  flex: 1;
  background: #dadada;
}
.thumb {
  border: 1px solid #ababab;
  background: #fff;
}
.vscroll .thumb {
  height: 56%;
}
.hscroll .thumb {
  width: 95%;
  height: 100%;
}

/* sheet tabs */
.sheetbar {
  display: flex;
  flex: none;
  height: 24px;
  padding-right: 25px;
  overflow: hidden;
}
.sheet-nav {
  display: flex;
  align-items: center;
  justify-content: center;
  gap: 22px;
  width: 104px;
  padding-top: 4px;
  padding-right: 14px;
  border-right: 1px solid #999;
}
.sheet-nav .left {
  border-right-color: #c0c0c0;
  border-left: 0;
}
.sheet-nav .right {
  border-left-color: #c0c0c0;
  border-right: 0;
}
.sheet-tab {
  height: 24px;
  padding: 0 12px;
  border-right: 1px solid #999;
  font-size: 17px;
}
.sheet-tab.current {
  margin-top: -1px;
  height: 25px;
  background: #fff;
  color: #217346;
  font-size: 18px;
}
.add {
  margin: 5px auto 0 33px;
  height: 20px;
}
.sheetbar .dots {
  margin: 8px 14px 0 0;
}

/* repair dialog */
.dialog {
  position: absolute;
  left: 983px;
  top: 382px;
  width: 650px;
  border: 1px solid #777;
  background: #f0f0f0;
  color: #000;
  box-shadow: 0 5px 16px rgba(0, 0, 0, 0.35);
}
.dialog-title {
  display: flex;
  align-items: center;
  height: 37px;
  padding: 0 2px 0 9px;
  background: #fff;
}
.dialog-title span {
  flex: 1;
  font-size: 15px;
}
.dialog-title button {
  width: 57px;
  height: 37px;
}
.dialog-title svg {
  stroke: #000;
  stroke-width: 1.2;
}
.dialog-body {
  padding: 10px 8px 19px;
}
.message {
  display: flex;
  gap: 13px;
  height: 32px;
}
.details {
  display: flex;
  justify-content: space-between;
  height: 166px;
  padding: 2px 1px 2px 3px;
  border: 1px solid #ababab;
  background: #fff;
  font-size: 15px;
}
.details p {
  margin: 0;
}
.strip {
  display: flex;
  flex-direction: column;
  align-items: center;
  justify-content: space-between;
  width: 20px;
  padding: 8px 0;
  background: #f0f0f0;
  color: #b5b5b5;
}
.strip .chev {
  width: 12px;
  height: 9px;
}
.flip {
  transform: scaleY(-1);
}
.log {
  display: flex;
  justify-content: space-between;
  height: 35px;
  padding: 4px 1px 0;
  border-bottom: 1px solid #dcdcdc;
  white-space: nowrap;
}
.log a {
  padding-top: 2px;
  color: #0066cc;
  font-size: 15px;
}
.actions {
  display: flex;
  justify-content: flex-end;
  padding: 12px 1px 0 0;
}
.actions button {
  width: 99px;
  height: 34px;
  border: 2px solid #0078d7;
  background: #e1e1e1;
  outline: 1px dotted #000;
  outline-offset: -4px;
}
```
FILE: sheet.js
```javascript
const columns = 'ABCDEFGHIJKLMNOPQRSTUV'.split('');
const headings = { B: '판매날짜', C: '제품명', D: '수량', E: '단가', F: '금액', G: '결재구분' };
const sales = [
  { B: '2019-01-13', C: 'Q-004', D: '4', E: '400', F: '₩1,600', G: '카드' },
  { B: '2019-01-18', C: 'Q-001', D: '2', E: '100', F: '₩200', G: '현금' }
];
const products = ['제품목록', 'Q-001', 'Q-002', 'Q-003', 'Q-004', 'Q-005', 'Q-006', 'Q-007', 'Q-008', 'Q-009', 'Q-010'];

function cellText(row, col) {
  if (row === 3 && headings[col]) return headings[col];
  if (col === 'I' && row >= 3) return products[row - 3] || '';
  return (sales[row - 4] && sales[row - 4][col]) || '';
}

function cellClass(row, col) {
  const list = [];
  const inSales = col >= 'B' && col <= 'G';
  if (row === 2 && (inSales || col === 'I')) list.push('thick');
  if (row >= 3 && inSales) {
    list.push('line-b');
    if (col !== 'G') list.push('line-r');
    if (row === 3) list.push('head');
    else if (col >= 'D' && col <= 'F') list.push('num');
  }
  if (col === 'I' && row >= 3 && row <= 13) {
    list.push('line-l', 'line-r', row === 3 ? 'thick' : 'line-b');
  }
  return list.join(' ');
}

let html = '<colgroup><col class="c-head">' + columns.map(c => `<col class="c-${c}">`).join('') + '</colgroup>';
html += '<thead><tr><th class="corner"></th>' + columns.map(c => `<th${c === 'A' ? ' class="picked"' : ''}>${c}</th>`).join('') + '</tr></thead><tbody>';

for (let row = 1; row <= 23; row++) {
  html += `<tr class="row-${row}"><th${row === 1 ? ' class="picked"' : ''}><div>${row}</div></th>`;
  for (const col of columns) {
    if (row === 1 && col === 'C') {
      html += '<td class="title" colspan="4">판매현황</td>';
    } else if (!(row === 1 && col > 'C' && col <= 'F')) {
      html += `<td class="${cellClass(row, col)}">${cellText(row, col)}</td>`;
    }
  }
  html += '</tr>';
}
document.getElementById('grid').innerHTML = html + '</tbody>';
```
